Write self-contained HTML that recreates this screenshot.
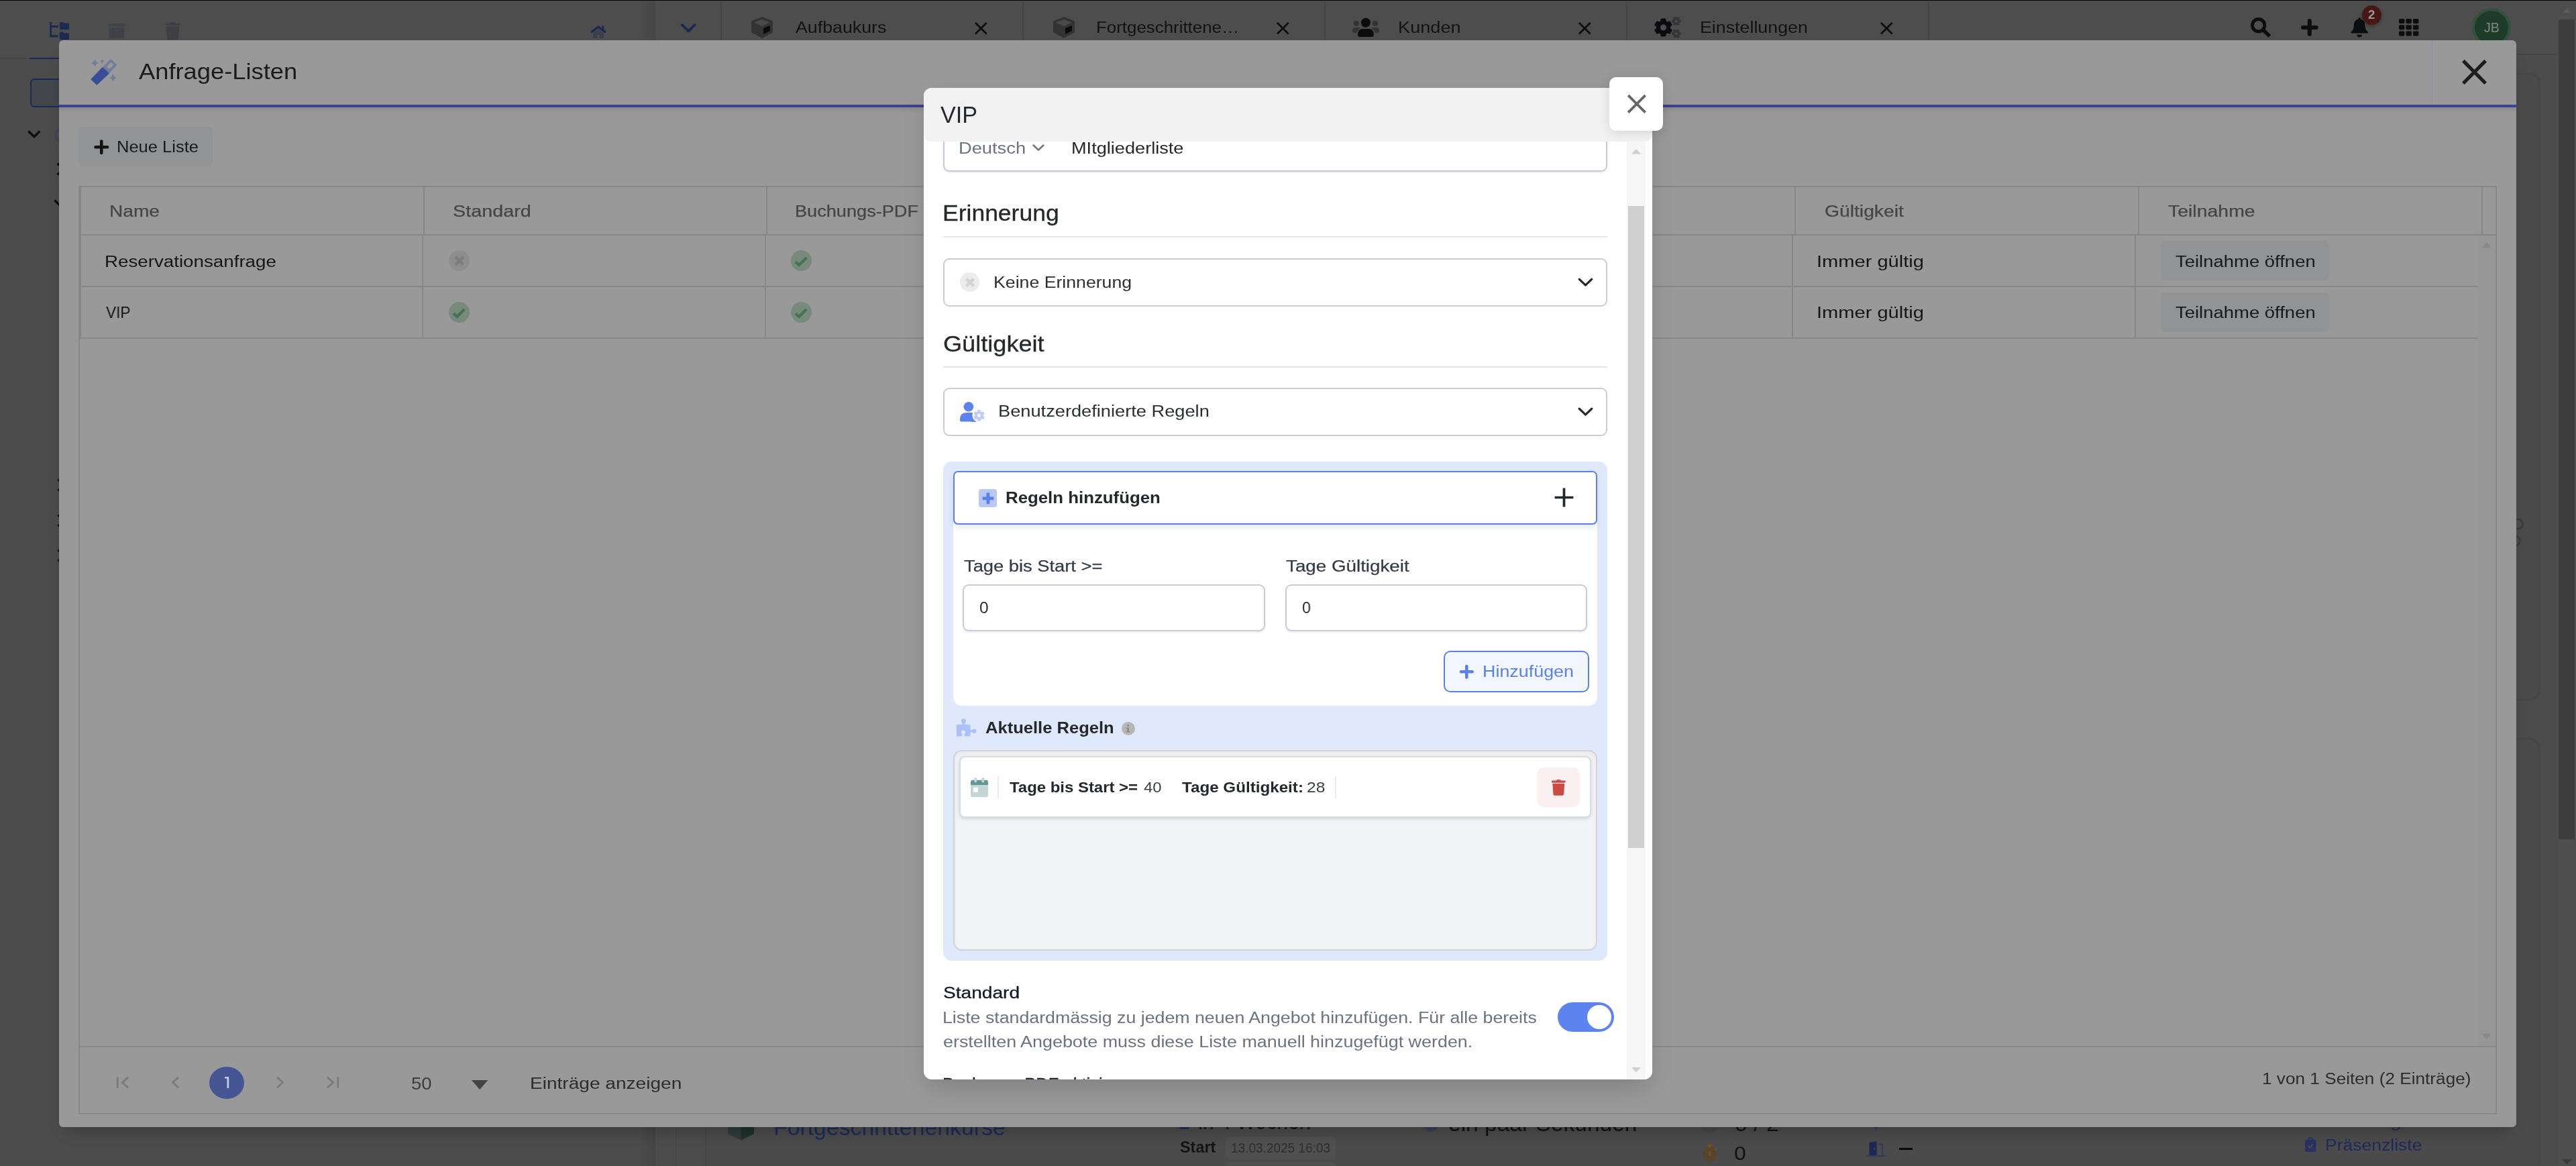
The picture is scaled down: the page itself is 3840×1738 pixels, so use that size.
<!DOCTYPE html>
<html lang="de"><head><meta charset="utf-8"><title>Anfrage-Listen</title>
<style>
html,body{margin:0;padding:0;}
html{width:3840px;height:1738px;overflow:hidden;}
body{width:3840px;height:1738px;overflow:hidden;position:relative;background:#4c4c4c;
font-family:"Liberation Sans",sans-serif;}
body div,body svg{position:absolute;}
.root{left:0;top:0;width:3840px;height:1738px;overflow:hidden;}
body svg{display:block;overflow:visible;}
.t{white-space:nowrap;transform-origin:0 0;font-weight:400;will-change:transform;}
</style></head>
<body>
<div class="root">
<div style="left:0px;top:0px;width:3840px;height:1738px;background:#4c4c4c;"></div>
<div style="left:0px;top:1px;width:3840px;height:86px;background:#4d4d4d;"></div>
<div style="left:0px;top:0px;width:3840px;height:1.2px;background:#020202;"></div>
<div style="left:0px;top:1.2px;width:3840px;height:1.3px;background:#505050;"></div>
<div style="left:950px;top:1px;width:27.3px;height:87px;background:linear-gradient(90deg,rgba(0,0,0,0),rgba(0,0,0,.09));"></div>
<div style="left:1074.2px;top:3px;width:1.6px;height:57px;background:#444444;"></div>
<div style="left:1524px;top:3px;width:1.6px;height:57px;background:#444444;"></div>
<div style="left:1974px;top:3px;width:1.6px;height:57px;background:#444444;"></div>
<div style="left:2424.3px;top:3px;width:1.6px;height:57px;background:#444444;"></div>
<div style="left:2874px;top:3px;width:1.6px;height:57px;background:#444444;"></div>
<div style="left:0px;top:86px;width:44px;height:2px;background:#454749;"></div>
<div style="left:44px;top:86px;width:44px;height:2px;background:#1a2752;"></div>
<svg style="left:74px;top:32.8px;" width="29" height="26" viewBox="0 0 29 26" preserveAspectRatio="none"><path d="M0.2 0 H2.9 V5 H12.8 V8 H2.9 V19.2 H12.8 V22.5 H0.2 Z" fill="#1c2a4f"/><path d="M14.8 1.5 Q14.8 0 16.3 0 H20 L21.5 1.6 H27.4 Q28.9 1.6 28.9 3.1 V9.4 Q28.9 10.9 27.4 10.9 H16.3 Q14.8 10.9 14.8 9.4 Z" fill="#1c2a4f"/><path d="M14.8 16.1 Q14.8 14.6 16.3 14.6 H20 L21.5 16.2 H27.4 Q28.9 16.2 28.9 17.7 V24.4 Q28.9 25.9 27.4 25.9 H16.3 Q14.8 25.9 14.8 24.4 Z" fill="#1c2a4f"/></svg>
<svg style="left:161px;top:34.7px;" width="26" height="22.2" viewBox="0 0 26 22.2" preserveAspectRatio="none"><rect x="0" y="0" width="26" height="4.4" rx="1" fill="#414348"/><path d="M1.8 6.4 H24.2 V20.7 Q24.2 22.2 22.7 22.2 H3.3 Q1.8 22.2 1.8 20.7 Z" fill="#3f4146"/><rect x="9.6" y="9.4" width="6.4" height="1.7" rx=".8" fill="#4b4d52"/></svg>
<svg style="left:245.8px;top:33px;" width="22.8" height="26" viewBox="0 0 22.8 26" preserveAspectRatio="none"><path d="M7 2.2 Q7.6 0 9 0 H13.8 Q15.2 0 15.8 2.2 Z" fill="#3d3f44"/><rect x="0" y="1.7" width="22.8" height="3.1" rx=".8" fill="#3d3f44"/><path d="M1.5 6.3 H21.3 L19.8 24.3 Q19.6 26 18 26 H4.8 Q3.2 26 3 24.3 Z" fill="#3d3f44"/></svg>
<svg style="left:876px;top:34px;" width="32" height="26" viewBox="876 34 32 26" preserveAspectRatio="none"><path d="M884 49.6 L891.9 43 L900 49.6 V55.4 Q900 57 898.4 57 H893.8 V52 H890.2 V57 H885.6 Q884 57 884 55.4 Z" fill="#3a3e4f"/><path d="M881.2 48.3 L891.9 40 L902.8 48.3" stroke="#1b2850" stroke-width="3.2" fill="none" stroke-linejoin="round"/><rect x="897.2" y="38.2" width="2.9" height="6.6" fill="#1b2850"/></svg>
<svg style="left:1010px;top:30px;" width="34" height="24" viewBox="1010 30 34 24" preserveAspectRatio="none"><path d="M1016.9 37.2 L1026.2 46.4 L1035.6 37.2" stroke="#1b2850" stroke-width="3.8" fill="none" stroke-linecap="round" stroke-linejoin="round"/></svg>
<svg style="left:1120px;top:25px;" width="32" height="32" viewBox="0 0 32 32" preserveAspectRatio="none"><path d="M16 1.8 L30.4 7.4 L30.4 22.4 L16 30.2 L1.6 22.4 L1.6 7.4 Z" fill="#333" stroke="#333" stroke-width="3.2" stroke-linejoin="round"/><path d="M3.8 8.5 L16 4 L27.8 8.5 L16 14 Z" fill="#4a4a4a"/><path d="M18 17 L27.8 13.1 L27.8 21 L18 26 Z" fill="#0a0b0d"/></svg>
<div class="t" style="left:1186px;top:29.3px;font-size:24.41px;line-height:24.41px;color:#121212;transform:scaleX(1.0959);">Aufbaukurs</div>
<svg style="left:1452.9px;top:32.6px;" width="18.6" height="18.4" viewBox="0 0 18.6 18.4" preserveAspectRatio="none"><path d="M0.95 0.95 L17.65 17.45 M17.65 0.95 L0.95 17.45" stroke="#0c0d0e" stroke-width="2.7" fill="none"/></svg>
<svg style="left:1570px;top:25px;" width="32" height="32" viewBox="0 0 32 32" preserveAspectRatio="none"><path d="M16 1.8 L30.4 7.4 L30.4 22.4 L16 30.2 L1.6 22.4 L1.6 7.4 Z" fill="#333" stroke="#333" stroke-width="3.2" stroke-linejoin="round"/><path d="M3.8 8.5 L16 4 L27.8 8.5 L16 14 Z" fill="#4a4a4a"/><path d="M18 17 L27.8 13.1 L27.8 21 L18 26 Z" fill="#0a0b0d"/></svg>
<div class="t" style="left:1633.88px;top:29.3px;font-size:24.41px;line-height:24.41px;color:#121212;transform:scaleX(1.0599);">Fortgeschrittene…</div>
<svg style="left:1903.1px;top:32.6px;" width="18.6" height="18.4" viewBox="0 0 18.6 18.4" preserveAspectRatio="none"><path d="M0.95 0.95 L17.65 17.45 M17.65 0.95 L0.95 17.45" stroke="#0c0d0e" stroke-width="2.7" fill="none"/></svg>
<svg style="left:2010px;top:22px;" width="52" height="38" viewBox="2010 22 52 38" preserveAspectRatio="none"><circle cx="2021.9" cy="34.8" r="4" fill="#333"/><circle cx="2049.9" cy="34.8" r="4" fill="#333"/><path d="M2015.9 46 Q2015.9 41.1 2020.8 41.1 H2027 V48.7 H2018 Q2015.9 48.7 2015.9 46.6 Z" fill="#333"/><path d="M2056 46 Q2056 41.1 2051.1 41.1 H2045 V48.7 H2053.9 Q2056 48.7 2056 46.6 Z" fill="#333"/><path d="M2022.4 52.5 Q2022.4 41.4 2031 41.4 H2040.8 Q2049.4 41.4 2049.4 52.5 Q2049.4 56.6 2045.8 56.6 H2026 Q2022.4 56.6 2022.4 52.5 Z" fill="#4d4d4d"/><circle cx="2035.9" cy="33.8" r="8.5" fill="#4d4d4d"/><path d="M2024 51.8 Q2024 43 2031.5 43 H2040.3 Q2047.8 43 2047.8 51.8 Q2047.8 55 2044.8 55 H2027 Q2024 55 2024 51.8 Z" fill="#0b0c0e"/><circle cx="2035.9" cy="33.8" r="8.5" fill="#4d4d4d"/><circle cx="2035.9" cy="33.8" r="7.05" fill="#0b0c0e"/></svg>
<div class="t" style="left:2083.77px;top:29.3px;font-size:24.41px;line-height:24.41px;color:#121212;transform:scaleX(1.1139);">Kunden</div>
<svg style="left:2353.1px;top:32.6px;" width="18.6" height="18.4" viewBox="0 0 18.6 18.4" preserveAspectRatio="none"><path d="M0.95 0.95 L17.65 17.45 M17.65 0.95 L0.95 17.45" stroke="#0c0d0e" stroke-width="2.7" fill="none"/></svg>
<svg style="left:2460px;top:20px;" width="52" height="42" viewBox="2460 20 52 42" preserveAspectRatio="none"><path d="M2482.63 54.03 L2476.37 54.03 L2475.49 50.27 L2473.48 49.11 L2469.78 50.22 L2466.65 44.81 L2469.47 42.16 L2469.47 39.84 L2466.65 37.19 L2469.78 31.78 L2473.48 32.89 L2475.49 31.73 L2476.37 27.97 L2482.63 27.97 L2483.51 31.73 L2485.52 32.89 L2489.22 31.78 L2492.35 37.19 L2489.53 39.84 L2489.53 42.16 L2492.35 44.81 L2489.22 50.22 L2485.52 49.11 L2483.51 50.27 Z M2474.50 41.00 a5.00 5.00 0 1 0 10.00 0 a5.00 5.00 0 1 0 -10.00 0 Z" fill="#0b0c0e" fill-rule="evenodd" stroke="#0b0c0e" stroke-width="1" stroke-linejoin="round"/><path d="M2505.31 30.04 L2505.31 33.16 L2503.30 33.55 L2502.73 34.52 L2503.41 36.46 L2500.70 38.02 L2499.36 36.47 L2498.24 36.47 L2496.90 38.02 L2494.19 36.46 L2494.87 34.52 L2494.30 33.55 L2492.29 33.16 L2492.29 30.04 L2494.30 29.65 L2494.87 28.68 L2494.19 26.74 L2496.90 25.18 L2498.24 26.73 L2499.36 26.73 L2500.70 25.18 L2503.41 26.74 L2502.73 28.68 L2503.30 29.65 Z M2496.60 31.60 a2.20 2.20 0 1 0 4.40 0 a2.20 2.20 0 1 0 -4.40 0 Z" fill="#353535" fill-rule="evenodd" stroke="#353535" stroke-width=".6" stroke-linejoin="round"/><path d="M2505.31 48.54 L2505.31 51.66 L2503.30 52.05 L2502.73 53.02 L2503.41 54.96 L2500.70 56.52 L2499.36 54.97 L2498.24 54.97 L2496.90 56.52 L2494.19 54.96 L2494.87 53.02 L2494.30 52.05 L2492.29 51.66 L2492.29 48.54 L2494.30 48.15 L2494.87 47.18 L2494.19 45.24 L2496.90 43.68 L2498.24 45.23 L2499.36 45.23 L2500.70 43.68 L2503.41 45.24 L2502.73 47.18 L2503.30 48.15 Z M2496.60 50.10 a2.20 2.20 0 1 0 4.40 0 a2.20 2.20 0 1 0 -4.40 0 Z" fill="#353535" fill-rule="evenodd" stroke="#353535" stroke-width=".6" stroke-linejoin="round"/></svg>
<div class="t" style="left:2533.81px;top:29.3px;font-size:24.41px;line-height:24.41px;color:#121212;transform:scaleX(1.0974);">Einstellungen</div>
<svg style="left:2803.1px;top:32.6px;" width="18.6" height="18.4" viewBox="0 0 18.6 18.4" preserveAspectRatio="none"><path d="M0.95 0.95 L17.65 17.45 M17.65 0.95 L0.95 17.45" stroke="#0c0d0e" stroke-width="2.7" fill="none"/></svg>
<svg style="left:3354px;top:25px;" width="32" height="31" viewBox="0 0 32 31" preserveAspectRatio="none"><circle cx="12.7" cy="12.7" r="9.2" stroke="#0d0d0e" stroke-width="4.8" fill="none"/><path d="M19 19 L29.4 29" stroke="#0d0d0e" stroke-width="5.4"/></svg>
<svg style="left:3430px;top:27.8px;" width="25.8" height="25.8" viewBox="0 0 25.8 25.8" preserveAspectRatio="none"><path d="M12.9 3 V22.8 M3 12.9 H22.8" stroke="#0d0d0e" stroke-width="6" stroke-linecap="round"/></svg>
<svg style="left:3503.6px;top:26px;" width="26.4" height="29.6" viewBox="0 0 26.4 29.6" preserveAspectRatio="none"><path d="M13.2 0 Q15 0 15 1.8 V2.6 Q21.6 4.2 21.6 12 Q21.6 18.5 25.6 21.2 Q26.8 22.4 25.6 23.6 H0.8 Q-0.4 22.4 0.8 21.2 Q4.8 18.5 4.8 12 Q4.8 4.2 11.4 2.6 V1.8 Q11.4 0 13.2 0 Z" fill="#0c0d0f"/><path d="M9.4 25.8 H17 Q16.6 29.6 13.2 29.6 Q9.8 29.6 9.4 25.8 Z" fill="#0c0d0f"/></svg>
<div style="left:3521px;top:7.9px;width:29px;height:29px;background:#451815;border-radius:50%;box-shadow:0 2px 5px rgba(0,0,0,.3);"></div>
<div class="t" style="left:3530.4px;top:13px;font-size:18.81px;line-height:18.81px;color:#9e9494;transform:scaleX(0.9600);font-weight:700;">2</div>
<svg style="left:3576.2px;top:28px;" width="29.4" height="25.4" viewBox="0 0 29.4 25.4" preserveAspectRatio="none"><rect x="0" y="0" width="8.3" height="7" rx="1.4" fill="#0c0d0f"/><rect x="10.55" y="0" width="8.3" height="7" rx="1.4" fill="#0c0d0f"/><rect x="21.1" y="0" width="8.3" height="7" rx="1.4" fill="#0c0d0f"/><rect x="0" y="9.2" width="8.3" height="7" rx="1.4" fill="#0c0d0f"/><rect x="10.55" y="9.2" width="8.3" height="7" rx="1.4" fill="#0c0d0f"/><rect x="21.1" y="9.2" width="8.3" height="7" rx="1.4" fill="#0c0d0f"/><rect x="0" y="18.4" width="8.3" height="7" rx="1.4" fill="#0c0d0f"/><rect x="10.55" y="18.4" width="8.3" height="7" rx="1.4" fill="#0c0d0f"/><rect x="21.1" y="18.4" width="8.3" height="7" rx="1.4" fill="#0c0d0f"/></svg>
<div style="left:3685px;top:11.8px;width:58px;height:58px;background:#34503f;border-radius:50%;"></div>
<div style="left:3689px;top:15.8px;width:50px;height:50px;background:#1f3b2a;border-radius:50%;"></div>
<div class="t" style="left:3703px;top:31.8px;font-size:19.32px;line-height:19.32px;color:#7d8a82;transform:scaleX(1.0159);">JB</div>
<div style="left:3751px;top:80px;width:61px;height:2px;background:#444444;"></div>
<div style="left:1053px;top:111px;width:2730.5px;height:931px;background:#4b4b4b;border-radius:14px;box-shadow:0 0 4px rgba(0,0,0,.25);"></div>
<div style="left:1053px;top:1102px;width:2730.5px;height:700px;background:#4b4b4b;border-radius:14px;box-shadow:0 0 4px rgba(0,0,0,.25);"></div>
<div style="left:3744px;top:772px;width:18px;height:18px;border-radius:50%;border:3px solid #3c3c3c;box-sizing:border-box;"></div>
<div style="left:3740px;top:797px;width:18px;height:18px;border-radius:50%;border:3px solid #3c3c3c;box-sizing:border-box;"></div>
<div style="left:3814px;top:1px;width:26px;height:1737px;background:#4e4e4e;"></div>
<div style="left:3814px;top:29px;width:24px;height:1222px;background:#3d3d3d;"></div>
<svg style="left:3819px;top:12px;" width="14.5" height="7.5" viewBox="0 0 14.5 7.5" preserveAspectRatio="none"><path d="M0 7.5 L7.25 0 L14.5 7.5 Z" fill="#5a5a5a"/></svg>
<svg style="left:3818.6px;top:1728px;" width="14.5" height="7.5" viewBox="0 0 14.5 7.5" preserveAspectRatio="none"><path d="M0 0 L7.25 7.5 L14.5 0 Z" fill="#3a3a3a"/></svg>
<div style="left:44.5px;top:117px;width:60px;height:42.5px;background:#43464b;border-radius:6px;border:2px solid #1b2a5c;box-sizing:border-box;"></div>
<svg style="left:39.5px;top:192.5px;" width="22.5" height="14.5" viewBox="0 0 22.5 14.5" preserveAspectRatio="none"><path d="M2.4 2.6 L10.9 10.8 L19.4 2.6" stroke="#0f0f0f" stroke-width="3.5" fill="none"/></svg>
<div style="left:80.5px;top:189.5px;width:23px;height:23px;border-radius:50%;border:4px solid #414158;box-sizing:border-box;"></div>
<svg style="left:83.5px;top:242px;" width="12" height="20" viewBox="0 0 12 20" preserveAspectRatio="none"><path d="M1.5 1.5 L10 10 L1.5 18.5" stroke="#0f0f0f" stroke-width="3.4" fill="none"/></svg>
<svg style="left:80px;top:296.5px;" width="20" height="12" viewBox="0 0 20 12" preserveAspectRatio="none"><path d="M1.5 1.5 L10 10 L18.5 1.5" stroke="#0f0f0f" stroke-width="3.4" fill="none"/></svg>
<svg style="left:84.5px;top:713px;" width="12" height="20" viewBox="0 0 12 20" preserveAspectRatio="none"><path d="M1.5 1.5 L10 10 L1.5 18.5" stroke="#0f0f0f" stroke-width="3.4" fill="none"/></svg>
<svg style="left:84.5px;top:766px;" width="12" height="20" viewBox="0 0 12 20" preserveAspectRatio="none"><path d="M1.5 1.5 L10 10 L1.5 18.5" stroke="#0f0f0f" stroke-width="3.4" fill="none"/></svg>
<svg style="left:84.5px;top:818px;" width="12" height="20" viewBox="0 0 12 20" preserveAspectRatio="none"><path d="M1.5 1.5 L10 10 L1.5 18.5" stroke="#0f0f0f" stroke-width="3.4" fill="none"/></svg>
<div style="left:950px;top:1679px;width:27.3px;height:59px;background:linear-gradient(90deg,rgba(0,0,0,0),rgba(0,0,0,.09));"></div>
<div style="left:1006.5px;top:1679px;width:1.5px;height:59px;background:#434343;"></div>
<svg style="left:1085px;top:1660px;" width="39" height="39.5" viewBox="0 0 39 39.5" preserveAspectRatio="none"><path d="M19.5 0 L39 9 L39 30 L19.5 39.5 L0 30 L0 9 Z" fill="#2f3c3a"/><path d="M19.5 19 L39 9.5 L39 30 L19.5 39.5 Z" fill="#1f302b"/></svg>
<div class="t" style="left:1152.92px;top:1665px;font-size:32.54px;line-height:32.54px;color:#1b2a5a;transform:scaleX(1.0391);">Fortgeschrittenenkurse</div>
<div style="left:1758px;top:1668px;width:15px;height:15px;background:#222c5a;border-radius:2px;"></div>
<div class="t" style="left:1786.14px;top:1655.8px;font-size:32.54px;line-height:32.54px;color:#111;transform:scaleX(0.9310);">in 4 Wochen</div>
<div class="t" style="left:1759px;top:1699.2px;font-size:23.39px;line-height:23.39px;color:#141414;transform:scaleX(0.9912);font-weight:700;">Start</div>
<div style="left:1827px;top:1693.5px;width:164px;height:34px;background:#505050;border-radius:7px;"></div>
<div class="t" style="left:1834.59px;top:1700.5px;font-size:20.85px;line-height:20.85px;color:#2c2d30;transform:scaleX(0.9124);">13.03.2025 16:03</div>
<div style="left:1827px;top:1732px;width:164px;height:34px;background:#505050;border-radius:7px;"></div>
<div style="left:2122.5px;top:1667px;width:20px;height:20px;background:#3a3f5c;border-radius:50%;"></div>
<div class="t" style="left:2158.67px;top:1658.5px;font-size:32.54px;line-height:32.54px;color:#111;transform:scaleX(1.0306);">ein paar Sekunden</div>
<div style="left:2536px;top:1662px;width:26px;height:26px;background:#474747;border-radius:50%;"></div>
<div class="t" style="left:2585.83px;top:1661.5px;font-size:28.98px;line-height:28.98px;color:#111;transform:scaleX(1.1685);">0 / 2</div>
<svg style="left:2538.4px;top:1706px;" width="22" height="26" viewBox="0 0 22 26" preserveAspectRatio="none"><circle cx="10.8" cy="14.6" r="10.8" fill="#57442f"/><rect x="7.4" y="0" width="7.2" height="2.8" fill="#7a5217"/><rect x="9.8" y="2" width="2.4" height="3.4" fill="#7a5217"/><rect x="9.7" y="9.6" width="2.4" height="7.4" fill="#7a5217"/><circle cx="19.5" cy="7.4" r="1.5" fill="#7a5217"/></svg>
<div class="t" style="left:2585.39px;top:1704.6px;font-size:28.98px;line-height:28.98px;color:#111;transform:scaleX(1.1071);">0</div>
<svg style="left:2793px;top:1679px;" width="8" height="5" viewBox="0 0 8 5" preserveAspectRatio="none"><path d="M0 0 H8 L4 5 Z" fill="#2c3865"/></svg>
<svg style="left:2782px;top:1700.5px;" width="29.5" height="23.5" viewBox="0 0 29.5 23.5" preserveAspectRatio="none"><path d="M4.4 2.2 L15.6 0 V21 H4.4 Z" fill="#1c2a52"/><path d="M17.5 4.5 H24 V21" stroke="#343c5a" stroke-width="2.2" fill="none"/><rect x="0" y="20.8" width="29.5" height="2.4" fill="#343c5a"/><circle cx="12" cy="11.8" r="1.2" fill="#4c4c4c"/></svg>
<div style="left:2831px;top:1710.5px;width:20px;height:3px;background:#090909;"></div>
<div class="t" style="left:3562.76px;top:1660px;font-size:24.41px;line-height:24.41px;color:#1e2a5c;transform:scaleX(1.2364);">g</div>
<svg style="left:3436px;top:1696px;" width="16.4" height="21" viewBox="0 0 16.4 21" preserveAspectRatio="none"><path d="M0 4.6 Q0 2.6 2 2.6 H14.4 Q16.4 2.6 16.4 4.6 V19 Q16.4 21 14.4 21 H2 Q0 21 0 19 Z" fill="#2b3262"/><path d="M5.2 2.6 Q5.2 0 8.2 0 Q11.2 0 11.2 2.6" stroke="#2b3262" stroke-width="1.8" fill="none"/><path d="M4.8 12 L7.4 14.6 L11.8 9.6" stroke="#4c4c4c" stroke-width="1.8" fill="none"/></svg>
<div class="t" style="left:3466.33px;top:1694.8px;font-size:24.41px;line-height:24.41px;color:#1e2a5c;transform:scaleX(1.0861);">Präsenzliste</div>
<div style="left:88px;top:60px;width:3663px;height:1619.5px;background:#999999;border-radius:6px;box-shadow:0 14px 24px -12px rgba(0,0,0,.32);"></div>
<div style="left:88px;top:156px;width:3663px;height:4px;background:#3e4090;"></div>
<div style="left:88px;top:160px;width:3663px;height:9px;background:linear-gradient(180deg,rgba(0,0,0,.09),rgba(0,0,0,0));"></div>
<div style="left:3624.5px;top:60px;width:1.8px;height:96px;background:#8a92a6;"></div>
<svg style="left:130px;top:84px;" width="50" height="48" viewBox="130 84 50 48" preserveAspectRatio="none"><path d="M153.45 100.69 L165.31 89.27 L173.1 96.47 L162.13 108.77 Z M159 99.2 L163 103.1 L169.7 96.2 L165.5 92.7 Z" fill="#737d9a" fill-rule="evenodd"/><path d="M153.45 100.69 L165.31 89.27 L173.1 96.47 L162.13 108.77 Z" fill="none" stroke="#737d9a" stroke-width="2" stroke-linejoin="round"/><path d="M137.22 118.17 L144.22 125.02 L160.81 109.41 L152.85 102 Z" fill="#394f95" stroke="#394f95" stroke-width="3" stroke-linejoin="round"/><path d="M141.4 87.3 Q142.28 92.84 146.9 93.9 Q142.28 94.96 141.4 100.5 Q140.52 94.96 135.9 93.9 Q140.52 92.84 141.4 87.3 Z" fill="#737d9a"/><path d="M152.5 87.3 Q153.14 90.66 156.5 91.3 Q153.14 91.94 152.5 95.3 Q151.86 91.94 148.5 91.3 Q151.86 90.66 152.5 87.3 Z" fill="#737d9a"/><path d="M168.4 109.5 Q169.28 114.88 173.9 115.9 Q169.28 116.92 168.4 122.3 Q167.52 116.92 162.9 115.9 Q167.52 114.88 168.4 109.5 Z" fill="#737d9a"/></svg>
<div class="t" style="left:207.2px;top:91.4px;font-size:32.54px;line-height:32.54px;color:#1b1b1c;transform:scaleX(1.1161);">Anfrage-Listen</div>
<svg style="left:3668px;top:87px;" width="41" height="40.6" viewBox="0 0 41 40.6" preserveAspectRatio="none"><path d="M3.9 3.7 L37.2 37.3 M37.2 3.7 L3.9 37.3" stroke="#1c1d1f" stroke-width="5.2" fill="none"/></svg>
<div style="left:117.4px;top:189px;width:199.6px;height:58.8px;background:#919395;border-radius:7px;"></div>
<svg style="left:140.5px;top:208.5px;" width="20.5" height="20.5" viewBox="0 0 20.5 20.5" preserveAspectRatio="none"><path d="M10.25 1.5 V19 M1.5 10.25 H19" stroke="#131313" stroke-width="4.6" stroke-linecap="round"/></svg>
<div class="t" style="left:173.91px;top:207px;font-size:24.41px;line-height:24.41px;color:#18181a;transform:scaleX(1.0452);">Neue Liste</div>
<div style="left:117px;top:277px;width:3605px;height:1384px;border:2px solid #878787;box-sizing:border-box;"></div>
<div style="left:119px;top:279px;width:2px;height:225px;background:#878787;"></div>
<div style="left:119px;top:349px;width:3601px;height:2px;background:#878787;"></div>
<div style="left:119px;top:425.6px;width:3574px;height:2px;background:#878787;"></div>
<div style="left:119px;top:502.8px;width:3574px;height:2px;background:#878787;"></div>
<div style="left:119px;top:1559.4px;width:3601px;height:2px;background:#878787;"></div>
<div style="left:630.5px;top:279px;width:2px;height:70px;background:#878787;"></div>
<div style="left:1142.4px;top:279px;width:2px;height:70px;background:#878787;"></div>
<div style="left:1653.5px;top:279px;width:2px;height:70px;background:#878787;"></div>
<div style="left:2164.5px;top:279px;width:2px;height:70px;background:#878787;"></div>
<div style="left:2675px;top:279px;width:2px;height:70px;background:#878787;"></div>
<div style="left:3187.4px;top:279px;width:2px;height:70px;background:#878787;"></div>
<div style="left:3698.6px;top:279px;width:2px;height:70px;background:#878787;"></div>
<div style="left:629.3px;top:351px;width:2px;height:153.8px;background:#878787;"></div>
<div style="left:1140.2px;top:351px;width:2px;height:153.8px;background:#878787;"></div>
<div style="left:1650.7px;top:351px;width:2px;height:153.8px;background:#878787;"></div>
<div style="left:2161.2px;top:351px;width:2px;height:153.8px;background:#878787;"></div>
<div style="left:2671.2px;top:351px;width:2px;height:153.8px;background:#878787;"></div>
<div style="left:3182.2px;top:351px;width:2px;height:153.8px;background:#878787;"></div>
<div style="left:3692.6px;top:351px;width:27.4px;height:1208.4px;background:#969696;"></div>
<svg style="left:3700px;top:360.7px;" width="13.2" height="8.2" viewBox="0 0 13.2 8.2" preserveAspectRatio="none"><path d="M0 8.2 L6.6 0 L13.2 8.2 Z" fill="#898989"/></svg>
<svg style="left:3700px;top:1541.2px;" width="13.2" height="8.2" viewBox="0 0 13.2 8.2" preserveAspectRatio="none"><path d="M0 0 L6.6 8.2 L13.2 0 Z" fill="#898989"/></svg>
<div class="t" style="left:163px;top:303.1px;font-size:24.41px;line-height:24.41px;color:#454545;transform:scaleX(1.1505);-webkit-text-stroke:0.25px #454545;">Name</div>
<div class="t" style="left:675.12px;top:303.1px;font-size:24.41px;line-height:24.41px;color:#454545;transform:scaleX(1.1791);-webkit-text-stroke:0.25px #454545;">Standard</div>
<div class="t" style="left:1185.28px;top:303.1px;font-size:24.41px;line-height:24.41px;color:#454545;transform:scaleX(1.1121);-webkit-text-stroke:0.25px #454545;">Buchungs-PDF</div>
<div class="t" style="left:2719.54px;top:303.1px;font-size:24.41px;line-height:24.41px;color:#454545;transform:scaleX(1.1586);-webkit-text-stroke:0.25px #454545;">Gültigkeit</div>
<div class="t" style="left:3232.4px;top:303.1px;font-size:24.41px;line-height:24.41px;color:#454545;transform:scaleX(1.1654);-webkit-text-stroke:0.25px #454545;">Teilnahme</div>
<div class="t" style="left:156.33px;top:377.6px;font-size:24.41px;line-height:24.41px;color:#151515;transform:scaleX(1.1362);">Reservationsanfrage</div>
<div class="t" style="left:158.4px;top:454.4px;font-size:24.41px;line-height:24.41px;color:#151515;transform:scaleX(0.9279);">VIP</div>
<div style="left:668.9px;top:373.2px;width:31px;height:31px;background:#8e8e8e;border-radius:50%;"></div>
<svg style="left:676.7px;top:381px;" width="15.4" height="15.4" viewBox="0 0 15.4 15.4" preserveAspectRatio="none"><path d="M1.66 1.66 L13.74 13.74 M13.74 1.66 L1.66 13.74" stroke="#7e7e7e" stroke-width="4.6" fill="none"/></svg>
<div style="left:668.8px;top:450.3px;width:31.2px;height:31.2px;background:#788a7c;border-radius:50%;"></div>
<svg style="left:674.4px;top:457.9px;" width="20" height="16" viewBox="0 0 20 16" preserveAspectRatio="none"><path d="M2.2 9.2 L7.2 14 L18.2 3" stroke="#457355" stroke-width="4.2" fill="none"/></svg>
<div style="left:1178.8px;top:373.2px;width:31.2px;height:31.2px;background:#788a7c;border-radius:50%;"></div>
<svg style="left:1184.4px;top:380.8px;" width="20" height="16" viewBox="0 0 20 16" preserveAspectRatio="none"><path d="M2.2 9.2 L7.2 14 L18.2 3" stroke="#457355" stroke-width="4.2" fill="none"/></svg>
<div style="left:1178.8px;top:450.3px;width:31.2px;height:31.2px;background:#788a7c;border-radius:50%;"></div>
<svg style="left:1184.4px;top:457.9px;" width="20" height="16" viewBox="0 0 20 16" preserveAspectRatio="none"><path d="M2.2 9.2 L7.2 14 L18.2 3" stroke="#457355" stroke-width="4.2" fill="none"/></svg>
<div class="t" style="left:2708.02px;top:377.6px;font-size:24.41px;line-height:24.41px;color:#151515;transform:scaleX(1.1912);">Immer gültig</div>
<div style="left:3220.7px;top:359px;width:251.3px;height:58.6px;background:#919395;border-radius:7px;"></div>
<div class="t" style="left:3243.2px;top:377.6px;font-size:24.41px;line-height:24.41px;color:#18181a;transform:scaleX(1.1254);">Teilnahme öffnen</div>
<div class="t" style="left:2708.02px;top:454.4px;font-size:24.41px;line-height:24.41px;color:#151515;transform:scaleX(1.1912);">Immer gültig</div>
<div style="left:3220.7px;top:436px;width:251.3px;height:58.6px;background:#919395;border-radius:7px;"></div>
<div class="t" style="left:3243.2px;top:454.4px;font-size:24.41px;line-height:24.41px;color:#18181a;transform:scaleX(1.1254);">Teilnahme öffnen</div>
<svg style="left:172.5px;top:1604px;" width="20" height="19" viewBox="0 0 20 19" preserveAspectRatio="none"><path d="M2.2 1.2 V17.8" stroke="#7c7c7c" stroke-width="3"/><path d="M18 1.6 L9.4 9.5 L18 17.4" stroke="#7c7c7c" stroke-width="3" fill="none"/></svg>
<svg style="left:254.5px;top:1604px;" width="13" height="19" viewBox="0 0 13 19" preserveAspectRatio="none"><path d="M11 1.6 L2.6 9.5 L11 17.4" stroke="#7c7c7c" stroke-width="3" fill="none"/></svg>
<div style="left:312.3px;top:1590px;width:52px;height:48px;background:#445794;border-radius:50%;"></div>
<svg style="left:334.6px;top:1604.6px;" width="6.2" height="17" viewBox="0 0 6.2 17" preserveAspectRatio="none"><path d="M0 0 H6.2 V17 H3.5 V2.5 H0 Z" fill="#c9cde0"/></svg>
<svg style="left:411px;top:1604px;" width="13" height="19" viewBox="0 0 13 19" preserveAspectRatio="none"><path d="M2 1.6 L10.4 9.5 L2 17.4" stroke="#7c7c7c" stroke-width="3" fill="none"/></svg>
<svg style="left:485.6px;top:1604px;" width="20" height="19" viewBox="0 0 20 19" preserveAspectRatio="none"><path d="M17.8 1.2 V17.8" stroke="#7c7c7c" stroke-width="3"/><path d="M2 1.6 L10.6 9.5 L2 17.4" stroke="#7c7c7c" stroke-width="3" fill="none"/></svg>
<div class="t" style="left:612.92px;top:1603.2px;font-size:25.42px;line-height:25.42px;color:#393c41;transform:scaleX(1.0837);">50</div>
<svg style="left:703px;top:1609.7px;" width="24.4" height="14" viewBox="0 0 24.4 14" preserveAspectRatio="none"><path d="M0 0 H24.4 L12.2 14 Z" fill="#444446"/></svg>
<div class="t" style="left:790.3px;top:1603.2px;font-size:24.41px;line-height:24.41px;color:#2c2c2d;transform:scaleX(1.1499);">Einträge anzeigen</div>
<div class="t" style="left:3371.53px;top:1596px;font-size:24.41px;line-height:24.41px;color:#2c2c2d;transform:scaleX(1.0728);">1 von 1 Seiten (2 Einträge)</div>
<div style="left:1377px;top:131px;width:1086px;height:1477.7px;background:#fff;border-radius:12px;box-shadow:0 16px 36px -6px rgba(0,0,0,.17);"></div>
<div style="left:1377px;top:205px;width:1086px;height:1403.7px;overflow:hidden;border-radius:0 0 12px 12px;"><div style="left:-1377px;top:-205px;width:3840px;height:1738px">
<div style="left:1406px;top:170px;width:989.5px;height:85.5px;background:#fff;border-radius:9px;border:2px solid #c5cad8;box-shadow:0 2px 3px rgba(20,30,60,.07);box-sizing:border-box;"></div>
<div class="t" style="left:1428.77px;top:208.6px;font-size:24.41px;line-height:24.41px;color:#6b7280;transform:scaleX(1.1174);">Deutsch</div>
<svg style="left:1538.05px;top:213.75px;" width="19.9" height="12.05" viewBox="1538.05 213.75 19.9 12.05" preserveAspectRatio="none"><path d="M1540.55 216.25 L1548 223.3 L1555.45 216.25" stroke="#6b7280" stroke-width="2.5" fill="none" stroke-linecap="round" stroke-linejoin="round"/></svg>
<div class="t" style="left:1596.78px;top:208.6px;font-size:24.41px;line-height:24.41px;color:#24282c;transform:scaleX(1.1122);">MItgliederliste</div>
<div class="t" style="left:1404.62px;top:302.4px;font-size:32.54px;line-height:32.54px;color:#24282c;transform:scaleX(1.0912);-webkit-text-stroke:0.3px #24282c;">Erinnerung</div>
<div style="left:1406px;top:352px;width:989.5px;height:2px;background:#e3e5e9;"></div>
<div style="left:1406px;top:384.5px;width:989.5px;height:72px;background:#fff;border-radius:9px;border:2px solid #cdcdcf;box-sizing:border-box;"></div>
<div style="left:1431.4px;top:406.4px;width:28.6px;height:28.6px;background:#ececec;border-radius:50%;"></div>
<svg style="left:1438.7px;top:413.7px;" width="14" height="14" viewBox="0 0 14 14" preserveAspectRatio="none"><path d="M1.58 1.58 L12.42 12.42 M12.42 1.58 L1.58 12.42" stroke="#d3d3d3" stroke-width="4.4" fill="none"/></svg>
<div class="t" style="left:1481.11px;top:408.5px;font-size:24.41px;line-height:24.41px;color:#2a2e33;transform:scaleX(1.0929);">Keine Erinnerung</div>
<svg style="left:2350.9px;top:412.6px;" width="25" height="15.3" viewBox="2350.9 412.6 25 15.3" preserveAspectRatio="none"><path d="M2354.1 415.8 L2363.4 424.7 L2372.7 415.8" stroke="#24282c" stroke-width="3.2" fill="none" stroke-linecap="round" stroke-linejoin="round"/></svg>
<div class="t" style="left:1405.89px;top:496.5px;font-size:32.54px;line-height:32.54px;color:#24282c;transform:scaleX(1.1110);-webkit-text-stroke:0.3px #24282c;">Gültigkeit</div>
<div style="left:1406px;top:546px;width:989.5px;height:2px;background:#e3e5e9;"></div>
<div style="left:1406px;top:578px;width:989.5px;height:72px;background:#fff;border-radius:9px;border:2px solid #cdcdcf;box-sizing:border-box;"></div>
<svg style="left:1426px;top:594px;" width="46" height="40" viewBox="1426 594 46 40" preserveAspectRatio="none"><circle cx="1443.9" cy="606.3" r="7.3" fill="#5d84ee"/><path d="M1430.9 625.4 Q1430.9 615 1440.6 615 H1448 Q1452 615 1454.6 616.6 V628.6 H1434 Q1430.9 628.6 1430.9 625.4 Z" fill="#5d84ee"/><path d="M1449 628.6 H1456.5 V626 H1449 Z" fill="#5d84ee"/><circle cx="1459.5" cy="619.3" r="10.1" fill="#fff"/><path d="M1448 628.6 Q1453 628.9 1455.4 627.6 Q1452 627.6 1449.6 624 Z" fill="#5d84ee"/><path d="M1461.41 627.27 L1457.59 627.27 L1457.12 624.81 L1455.92 624.12 L1453.55 624.94 L1451.64 621.63 L1453.54 619.99 L1453.54 618.61 L1451.64 616.97 L1453.55 613.66 L1455.92 614.48 L1457.12 613.79 L1457.59 611.33 L1461.41 611.33 L1461.88 613.79 L1463.08 614.48 L1465.45 613.66 L1467.36 616.97 L1465.46 618.61 L1465.46 619.99 L1467.36 621.63 L1465.45 624.94 L1463.08 624.12 L1461.88 624.81 Z M1456.80 619.30 a2.70 2.70 0 1 0 5.40 0 a2.70 2.70 0 1 0 -5.40 0 Z" fill="#bccbf7" fill-rule="evenodd" stroke="#bccbf7" stroke-width=".6" stroke-linejoin="round"/></svg>
<div class="t" style="left:1487.97px;top:601.2px;font-size:24.41px;line-height:24.41px;color:#2a2e33;transform:scaleX(1.1154);">Benutzerdefinierte Regeln</div>
<svg style="left:2350.9px;top:606.4px;" width="25" height="15.3" viewBox="2350.9 606.4 25 15.3" preserveAspectRatio="none"><path d="M2354.1 609.6 L2363.4 618.5 L2372.7 609.6" stroke="#24282c" stroke-width="3.2" fill="none" stroke-linecap="round" stroke-linejoin="round"/></svg>
<div style="left:1406px;top:688px;width:990.3px;height:744px;background:#dfe9fb;border-radius:13px;"></div>
<div style="left:1421.4px;top:702.3px;width:959.4px;height:349.7px;background:#fff;border-radius:7px 7px 13px 13px;"></div>
<div style="left:1421.4px;top:702.3px;width:959.4px;height:79.6px;background:#fff;border-radius:7px;border:2.5px solid #5b80ea;box-shadow:0 5px 9px rgba(30,40,80,.10);box-sizing:border-box;"></div>
<div style="left:1459px;top:728.9px;width:27px;height:27px;background:#b9c8f6;border-radius:3.5px;"></div>
<svg style="left:1463.6px;top:733.5px;" width="17.8" height="17.8" viewBox="0 0 17.8 17.8" preserveAspectRatio="none"><path d="M8.9 0.6 V17.2 M0.6 8.9 H17.2" stroke="#5b80ea" stroke-width="4.8"/></svg>
<div class="t" style="left:1499.14px;top:730px;font-size:24.41px;line-height:24.41px;color:#24282c;transform:scaleX(1.0576);font-weight:700;">Regeln hinzufügen</div>
<svg style="left:2316.6px;top:727.4px;" width="29" height="29" viewBox="0 0 29 29" preserveAspectRatio="none"><path d="M14.5 0.6 V28.4 M0.6 14.5 H28.4" stroke="#24282c" stroke-width="3.7"/></svg>
<div class="t" style="left:1436.8px;top:832.3px;font-size:24.41px;line-height:24.41px;color:#333a47;transform:scaleX(1.1187);-webkit-text-stroke:0.25px #333a47;">Tage bis Start &gt;=</div>
<div class="t" style="left:1917.2px;top:832.3px;font-size:24.41px;line-height:24.41px;color:#333a47;transform:scaleX(1.1377);-webkit-text-stroke:0.25px #333a47;">Tage Gültigkeit</div>
<div style="left:1435.4px;top:870.7px;width:450.2px;height:70.4px;background:#fff;border-radius:9px;border:2px solid #c9cdd7;box-shadow:0 2px 3px rgba(20,30,60,.08);box-sizing:border-box;"></div>
<div style="left:1916px;top:870.7px;width:450.2px;height:70.4px;background:#fff;border-radius:9px;border:2px solid #c9cdd7;box-shadow:0 2px 3px rgba(20,30,60,.08);box-sizing:border-box;"></div>
<div class="t" style="left:1460.4px;top:893.8px;font-size:24.41px;line-height:24.41px;color:#2a2e33;transform:scaleX(0.9692);">0</div>
<div class="t" style="left:1941.2px;top:893.8px;font-size:24.41px;line-height:24.41px;color:#2a2e33;transform:scaleX(0.9538);">0</div>
<div style="left:2152px;top:970.3px;width:217.2px;height:61.8px;background:#f2f6fe;border-radius:10px;border:2.5px solid #5b80ea;box-sizing:border-box;"></div>
<svg style="left:2176px;top:990.8px;" width="20.6" height="20.6" viewBox="0 0 20.6 20.6" preserveAspectRatio="none"><path d="M10.3 2 V18.6 M2 10.3 H18.6" stroke="#5b80ea" stroke-width="4.6" stroke-linecap="round"/></svg>
<div class="t" style="left:2209.8px;top:989.2px;font-size:24.41px;line-height:24.41px;color:#5b80ea;transform:scaleX(1.1016);">Hinzufügen</div>
<svg style="left:1420px;top:1068px;" width="40" height="32" viewBox="1420 1068 40 32" preserveAspectRatio="none"><rect x="1425.9" y="1080" width="20.5" height="17.6" rx=".6" fill="#abc1f8"/><circle cx="1436.4" cy="1074.7" r="3.55" fill="#abc1f8"/><path d="M1434.6 1077.2 Q1435.4 1079 1433.4 1080.4 H1439.4 Q1437.4 1079 1438.2 1077.2 Z" fill="#abc1f8"/><circle cx="1452.2" cy="1089.7" r="3.2" fill="#abc1f8"/><path d="M1449.8 1088 Q1448 1088.8 1446.2 1087 V1092.4 Q1448 1090.6 1449.8 1091.4 Z" fill="#abc1f8"/><circle cx="1436" cy="1091.4" r="3" fill="#dfe9fb"/><path d="M1434.5 1093.6 Q1435.3 1095.6 1433.2 1097.8 H1438.8 Q1436.7 1095.6 1437.5 1093.6 Z" fill="#dfe9fb"/></svg>
<div class="t" style="left:1469.2px;top:1073px;font-size:24.41px;line-height:24.41px;color:#24282c;transform:scaleX(1.0468);font-weight:700;">Aktuelle Regeln</div>
<div style="left:1672px;top:1075.5px;width:20px;height:20px;background:#b6b6b6;border-radius:50%;"></div>
<svg style="left:1678.4px;top:1079.8px;" width="7.2" height="11.6" viewBox="0 0 7.2 11.6" preserveAspectRatio="none"><rect x="2" y="0" width="3.2" height="2.8" rx="1" fill="#8b8b8b"/><path d="M0.6 4.4 H5 V10 H6.8 V11.6 H0.4 V10 H2.2 V6 H0.6 Z" fill="#8b8b8b"/></svg>
<div style="left:1421px;top:1118px;width:959.6px;height:299.4px;background:#f3f4f6;border-radius:13px;box-shadow:inset 0 3px 8px rgba(0,0,0,.05);box-sizing:border-box;border:2px solid #d1d3d8;"></div>
<div style="left:1429.7px;top:1126.9px;width:942.2px;height:91.9px;background:#fff;border-radius:8px;box-shadow:0 2px 5px rgba(0,0,0,.13);box-sizing:border-box;border:2px solid #d9dce5;"></div>
<svg style="left:1440px;top:1155px;" width="40" height="36" viewBox="1440 1155 40 36" preserveAspectRatio="none"><path d="M1447 1165.6 Q1447 1162.8 1449.8 1162.8 H1470.1 Q1472.9 1162.8 1472.9 1165.6 V1170.2 H1447 Z" fill="#639693"/><path d="M1447 1170.1 H1472.9 V1185.3 Q1472.9 1188.1 1470.1 1188.1 H1449.8 Q1447 1188.1 1447 1185.3 Z" fill="#c2d6d8"/><rect x="1452.4" y="1159.3" width="3.7" height="6.9" rx=".9" fill="#c2d6d8"/><rect x="1463.4" y="1159.3" width="3.8" height="6.9" rx=".9" fill="#c2d6d8"/><rect x="1450.9" y="1173.7" width="7" height="7.3" fill="#fff"/></svg>
<div style="left:1487.3px;top:1157px;width:2px;height:32.5px;background:#ededee;"></div>
<div style="left:1990px;top:1157px;width:2px;height:32.5px;background:#ededee;"></div>
<div class="t" style="left:1505.2px;top:1162.3px;font-size:22.98px;line-height:22.98px;color:#24282c;transform:scaleX(1.0417);font-weight:700;">Tage bis Start &gt;=</div>
<div class="t" style="left:1704.8px;top:1162.3px;font-size:22.98px;line-height:22.98px;color:#3a3e44;transform:scaleX(1.0414);">40</div>
<div class="t" style="left:1762.4px;top:1162.3px;font-size:22.98px;line-height:22.98px;color:#24282c;transform:scaleX(1.0529);font-weight:700;">Tage Gültigkeit:</div>
<div class="t" style="left:1947.93px;top:1162.3px;font-size:22.98px;line-height:22.98px;color:#3a3e44;transform:scaleX(1.0684);">28</div>
<div style="left:2291px;top:1144px;width:64px;height:59px;background:#fbf0f1;border-radius:10px;"></div>
<svg style="left:2313px;top:1162px;" width="20.6" height="23.8" viewBox="0 0 20.6 23.8" preserveAspectRatio="none"><path d="M6.6 1.8 Q7 0 8.6 0 H12 Q13.6 0 14 1.8 Z" fill="#cc4a42"/><rect x="0" y="1.5" width="20.6" height="3.2" rx="1" fill="#cc4a42"/><path d="M1.4 6 H19.2 L18.2 21.6 Q18 23.8 15.8 23.8 H4.8 Q2.6 23.8 2.4 21.6 Z" fill="#cc4a42"/></svg>
<div class="t" style="left:1405.85px;top:1468px;font-size:24.41px;line-height:24.41px;color:#111827;transform:scaleX(1.1511);-webkit-text-stroke:0.3px #111827;">Standard</div>
<div class="t" style="left:1404.81px;top:1504.6px;font-size:24.41px;line-height:24.41px;color:#6b7280;transform:scaleX(1.0954);">Liste standardmässig zu jedem neuen Angebot hinzufügen. Für alle bereits</div>
<div class="t" style="left:1405.9px;top:1540.6px;font-size:24.41px;line-height:24.41px;color:#6b7280;transform:scaleX(1.1018);">erstellten Angebote muss diese Liste manuell hinzugefügt werden.</div>
<div style="left:2322px;top:1494px;width:83.8px;height:43.8px;background:#5d84ee;border-radius:22px;"></div>
<div style="left:2365.8px;top:1497.9px;width:36px;height:36px;background:#fff;border-radius:50%;"></div>
<div class="t" style="left:1404.9px;top:1604px;font-size:24.41px;line-height:24.41px;color:#111827;transform:scaleX(1.0477);-webkit-text-stroke:0.3px #111827;">Buchungs-PDF aktivieren</div>
<div style="left:2425px;top:211px;width:28px;height:1398px;background:#f6f6f6;"></div>
<svg style="left:2432px;top:222px;" width="14" height="7.4" viewBox="0 0 14 7.4" preserveAspectRatio="none"><path d="M0 7.4 L7 0 L14 7.4 Z" fill="#cfcfcf"/></svg>
<div style="left:2427.4px;top:307px;width:23.4px;height:957px;background:#cfcfcf;"></div>
<svg style="left:2431.6px;top:1590.6px;" width="14" height="7.4" viewBox="0 0 14 7.4" preserveAspectRatio="none"><path d="M0 0 L7 7.4 L14 0 Z" fill="#cfcfcf"/></svg>
</div></div>
<div style="left:1377px;top:131px;width:1086px;height:80px;background:#f2f2f2;border-radius:12px 12px 11px 11px;"></div>
<div class="t" style="left:1402px;top:153.8px;font-size:34.17px;line-height:34.17px;color:#24282c;transform:scaleX(0.9949);">VIP</div>
<div style="left:2399px;top:115px;width:80px;height:80px;background:#fff;border-radius:10px;box-shadow:0 2px 18px rgba(0,0,0,.13);"></div>
<svg style="left:2424.6px;top:140px;" width="29.8" height="29.8" viewBox="0 0 29.8 29.8" preserveAspectRatio="none"><path d="M2.2 2.2 L27.6 27.6 M27.6 2.2 L2.2 27.6" stroke="#666" stroke-width="3.8" fill="none"/></svg>
</div>
</body></html>
